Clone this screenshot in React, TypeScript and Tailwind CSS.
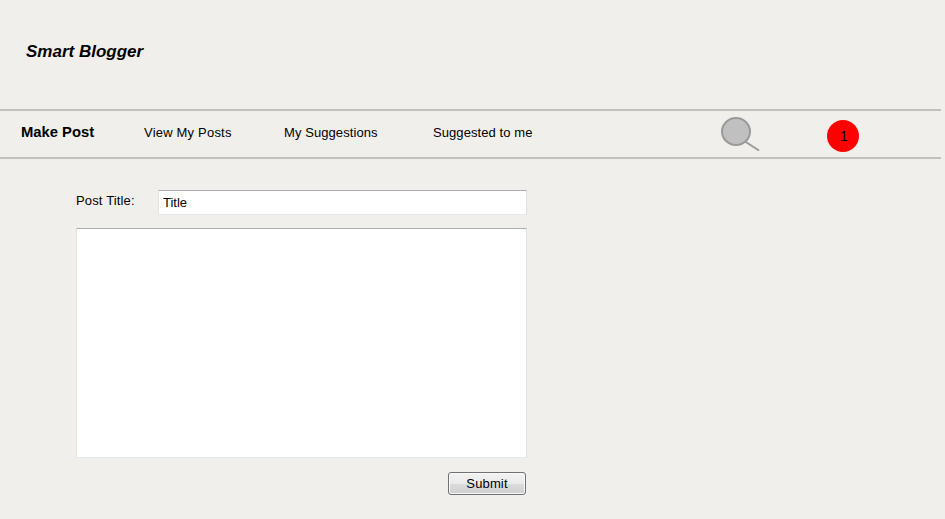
export default function App() {
  return (
    <div className="h-[519px] w-[945px] overflow-hidden bg-[#f0efeb] font-['Liberation_Sans',Arial,sans-serif] text-[13px] leading-4 text-black">
      <header className="h-[109px] pt-[42px] pl-[26px]">
        <h1 className="w-max text-[17px] leading-5 font-bold italic">Smart Blogger</h1>
      </header>
      <nav className="flex h-[50px] w-[941px] items-start border-y-2 border-[#c0c0c0] whitespace-nowrap">
        <a className="mt-[13px] ml-[21px] w-[123px] text-[14.8px] font-bold">Make Post</a>
        <a className="mt-[14px] w-[140px] tracking-[0.2px]">View My Posts</a>
        <a className="mt-[14px] w-[149px] tracking-[0.08px]">My Suggestions</a>
        <a className="mt-[14px] w-[287px] tracking-[0.08px]">Suggested to me</a>
        <svg className="mt-[5px] h-[36px] w-[42px]" viewBox="0 0 42 36" fill="none">
          <path d="M25 25.5 L39 34.5" stroke="#999999" strokeWidth="2" />
          <ellipse cx="16" cy="15.5" rx="14" ry="13.5" fill="#c0c0c0" stroke="#999999" strokeWidth="2" />
        </svg>
        <div className="mt-[9px] ml-[65px] flex h-8 w-8 items-center justify-center rounded-full bg-[#ff0000] pl-[2px] text-[14px]">1</div>
      </nav>
      <main className="w-[527px] pt-[31px] pl-[76px]">
        <div className="flex h-[25px]">
          <label className="mt-[3px] w-[82px] tracking-[0.15px]">Post Title:</label>
          <input
            className="h-[25px] w-[369px] rounded-[1px] border border-[#e2e3ea] border-t-[#abadb3] border-r-[#dbdfe6] border-b-[#e3e9ef] bg-white px-1 outline-none"
            defaultValue="Title"
          />
        </div>
        <textarea className="mt-[13px] block h-[230px] w-[451px] resize-none rounded-[1px] border border-[#e2e3ea] border-t-[#abadb3] border-r-[#dbdfe6] border-b-[#e3e9ef] bg-white outline-none" />
        <div className="mt-[14px] flex justify-end pr-px">
          <button className="h-[23px] w-[78px] rounded-[3px] border border-[#707070] bg-[linear-gradient(#f2f2f2_0%,#ebebeb_50%,#dddddd_50%,#cfcfcf_100%)] tracking-[0.15px] shadow-[inset_0_0_0_1px_#fafafa]">
            Submit
          </button>
        </div>
      </main>
    </div>
  );
}
